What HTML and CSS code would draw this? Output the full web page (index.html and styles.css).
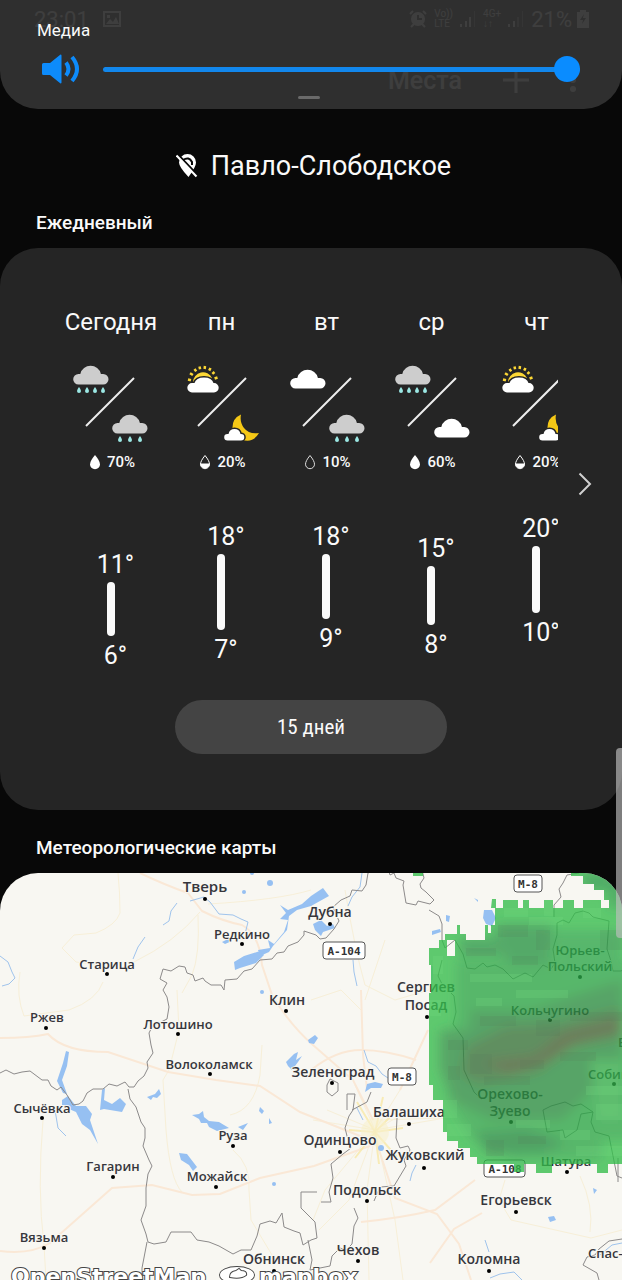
FILE: index.html
```html
<!doctype html>
<html lang="ru">
<head>
  <meta charset="utf-8">
  <meta name="viewport" content="width=device-width, initial-scale=1">
  <title>Погода</title>
  <link rel="stylesheet" href="styles.css">
</head>
<body>
  <!-- shared weather icons -->
  <svg class="sprite" aria-hidden="true">
    <symbol id="cloud" viewBox="0 0 36 21"><path d="M5.500 20.500a5.300 5.300 0 0 1 0-10.600h1.800a10.600 10.600 0 0 1 20.600 0h2.300a5.300 5.300 0 0 1 0 10.600z"/></symbol>
    <symbol id="drop" viewBox="0 0 4 6"><path d="M2 0q2 2.500 2 4a2 2 0 0 1-4 0q0-1.500 2-4z"/></symbol>
    <symbol id="rain4" viewBox="0 0 36 30">
      <use href="#cloud" width="36" height="21" fill="#cdcdcd"/>
      <g fill="#9be8e4"><use href="#drop" x="4" y="23" width="4" height="6"/><use href="#drop" x="12" y="23" width="4" height="6"/><use href="#drop" x="20" y="23" width="4" height="6"/><use href="#drop" x="28" y="23" width="4" height="6"/></g>
    </symbol>
    <symbol id="rain3" viewBox="0 0 36 30">
      <use href="#cloud" width="36" height="21" fill="#cdcdcd"/>
      <g fill="#9be8e4"><use href="#drop" x="6" y="23" width="4" height="6"/><use href="#drop" x="16" y="23" width="4" height="6"/><use href="#drop" x="26" y="23" width="4" height="6"/></g>
    </symbol>
    <symbol id="sun" viewBox="0 0 32 28">
      <path d="M6 17a10 10 0 0 1 19-4l-2 4z" fill="#fdd835"/>
      <path d="M1 14.500l3 .7M3 8.200l2.900 1.800M7.500 4l1.700 2.400M12.500 1.500l.6 2.800M18 1l-.4 3M23.500 3l-1.300 2.600M27.500 7l-2.200 1.900M30.500 12.500l-2.900 1" stroke="#fdd835" stroke-width="2.500" fill="none"/>
      <path d="M5 27.500a4.700 4.700 0 0 1 0-9.400h2.500q1.500-5.600 9.500-5.600t9.500 5.600h.5a4.700 4.700 0 0 1 0 9.400z" fill="#fff" stroke="#252525" stroke-width="3" paint-order="stroke"/>
    </symbol>
    <symbol id="moon" viewBox="0 0 36 28">
      <path d="M17 0.500q-9 4-8.500 14l9 11q11 4.500 17.500-6.500-10 1.500-15-5-4.500-6-3-13.500z" fill="#f5c816"/>
      <path d="M3.500 26.500a3.300 3.300 0 0 1 0-6.600h1q1-4.900 6-4.900t6 4.900h.500a3.300 3.300 0 0 1 0 6.600z" fill="#fff" stroke="#252525" stroke-width="3" paint-order="stroke"/>
    </symbol>
    <symbol id="wet-full" viewBox="0 0 12 16"><path d="M6 1q5 6 5 9.200a5 5 0 0 1-10 0q0-3.200 5-9.200z" fill="#fff"/></symbol>
    <symbol id="wet-half" viewBox="0 0 12 16"><path d="M6 1.500q4.500 5.500 4.500 8.700a4.500 4.500 0 0 1-9 0q0-3.200 4.500-8.700z" fill="none" stroke="#fff"/><path d="M1.200 9.500h9.600a4.800 4.800 0 1 1-9.600 0z" fill="#fff"/></symbol>
    <symbol id="wet-empty" viewBox="0 0 12 16"><path d="M6 1.500q4.500 5.500 4.500 8.700a4.500 4.500 0 0 1-9 0q0-3.200 4.500-8.700z" fill="none" stroke="#ddd"/></symbol>
  </svg>

  <header class="top">
    <div class="status">
      <span>23:01</span>
      <svg width="18" height="18" viewBox="0 0 18 18"><path fill-rule="evenodd" d="M0 1h18v16H0zM2 3v12h14V3zM3 14l4-5 3 3 3-5 3 7zM4 5h3v3H4z" fill="#fff"/></svg>
      <div class="status-right">
        <svg width="18" height="18" viewBox="0 0 18 18"><circle cx="9" cy="9" r="7" fill="#fff"/><path d="M1 4l3-3M17 4l-3-3M2 17l3-3M16 17l-3-3" stroke="#fff" stroke-width="2"/><path d="M9 5v4h4" stroke="#000" stroke-width="2" fill="none"/></svg>
        <span class="net">Vo))<br>LTE</span>
        <svg width="16" height="16" viewBox="0 0 16 16" fill="#fff"><path d="M0 13h2v3H0zM5 10h2v6H5zM9 6h2v10H9z"/><path opacity=".4" d="M14 0h1v16h-1z"/></svg>
        <span class="net">4G+<br>↓↑</span>
        <svg width="16" height="16" viewBox="0 0 16 16" fill="#fff"><path d="M0 13h2v3H0zM5 10h2v6H5z"/><path opacity=".4" d="M9 6h2v10H9zM14 0h1v16h-1z"/></svg>
        <span class="charge">21%<svg width="12" height="18" viewBox="0 0 12 18"><path fill-rule="evenodd" d="M3 0h6v2h3v16H0V2h3zM7 4l-4 6h3l-1 4 4-6H6z" fill="#fff"/></svg></span>
      </div>
    </div>
    <div class="appbar">
      <span class="appbar-title">Места</span>
      <svg width="26" height="26" viewBox="0 0 26 26"><path d="M13 0v26M0 13h26" stroke="#fff" stroke-width="3"/></svg>
      <svg width="6" height="24" viewBox="0 0 6 24" fill="#fff"><circle cx="3" cy="3" r="3"/><circle cx="3" cy="12" r="3"/><circle cx="3" cy="21" r="3"/></svg>
    </div>
  </header>

  <section class="volume">
    <label for="media">Медиа</label>
    <div class="volume-row">
      <svg width="40" height="32" viewBox="0 0 40 32"><path d="M2.500 10H9l10.500-8.500q1 0 1 1v27q0 1-1 1L9 22H2.500Q1 22 1 20.500v-9Q1 10 2.500 10z" fill="#0d8bfb"/><path d="M25 9.500q5 6.500 0 13M31 4q10 12 0 24" fill="none" stroke="#0d8bfb" stroke-width="4"/></svg>
      <input id="media" type="range" min="0" max="100" value="100">
    </div>
    <div class="grip"></div>
  </section>

  <main>
    <h1>
      <svg width="22" height="24" viewBox="0 0 22 24"><path d="M11.500 0a8.500 8.500 0 0 1 8.500 8.500q0 4.500-7.500 14.500Q3 13 3 8.500A8.500 8.500 0 0 1 11.500 0z" fill="#fff"/><path d="M7 6q6-4 9 2v3" fill="none" stroke="#080808" stroke-width="2"/><path d="M2 .5l20 21" stroke="#080808" stroke-width="2"/><path d="M.5 1.500l20 21" stroke="#fff" stroke-width="2"/></svg>
      Павло-Слободское
    </h1>

    <h2>Ежедневный</h2>
    <section class="card">
      <div class="forecast">
        <div class="days">
          <div class="day today">
            <h3>Сегодня</h3>
            <svg class="sky" width="76" height="80" viewBox="0 0 76 80"><use href="#rain4" x="0" y="1" width="36" height="30"/><path d="M13 63l48-48"/><use href="#rain3" x="39" y="50" width="36" height="30"/></svg>
            <p class="wet"><svg width="12" height="16"><use href="#wet-full"/></svg>70%</p>
            <div class="range" style="padding-top: 36px"><span>11°</span><i style="height: 54px"></i><span>6°</span></div>
          </div>
          <div class="day">
            <h3>пн</h3>
            <svg class="sky" width="76" height="80" viewBox="0 0 76 80"><use href="#sun" x="3" y="2" width="32" height="28"/><path d="M14 63l48-48"/><use href="#moon" x="40" y="51" width="36" height="28"/></svg>
            <p class="wet"><svg width="12" height="16"><use href="#wet-half"/></svg>20%</p>
            <div class="range" style="padding-top: 8px"><span>18°</span><i style="height: 76px"></i><span>7°</span></div>
          </div>
          <div class="day">
            <h3>вт</h3>
            <svg class="sky" width="76" height="80" viewBox="0 0 76 80"><use href="#cloud" x="1" y="5" width="36" height="21" fill="#fff"/><path d="M14 63l48-48"/><use href="#rain3" x="40" y="50" width="36" height="30"/></svg>
            <p class="wet"><svg width="12" height="16"><use href="#wet-empty"/></svg>10%</p>
            <div class="range" style="padding-top: 8px"><span>18°</span><i style="height: 65px"></i><span>9°</span></div>
          </div>
          <div class="day">
            <h3>ср</h3>
            <svg class="sky" width="76" height="80" viewBox="0 0 76 80"><use href="#rain4" x="1" y="1" width="36" height="30"/><path d="M14 63l48-48"/><use href="#cloud" x="40" y="54" width="36" height="21" fill="#fff"/></svg>
            <p class="wet"><svg width="12" height="16"><use href="#wet-full"/></svg>60%</p>
            <div class="range" style="padding-top: 20px"><span>15°</span><i style="height: 59px"></i><span>8°</span></div>
          </div>
          <div class="day">
            <h3>чт</h3>
            <svg class="sky" width="76" height="80" viewBox="0 0 76 80"><use href="#sun" x="3" y="2" width="32" height="28"/><path d="M14 63l48-48"/><use href="#moon" x="40" y="51" width="36" height="28"/></svg>
            <p class="wet"><svg width="12" height="16"><use href="#wet-half"/></svg>20%</p>
            <div class="range" style="padding-top: 0px"><span>20°</span><i style="height: 67px"></i><span>10°</span></div>
          </div>
        </div>
        <button class="next" aria-label="Далее"><svg width="14" height="24" viewBox="0 0 14 24"><path d="M1.500 1.500L12 12 1.500 22.500" fill="none" stroke="#d0d0d0" stroke-width="2"/></svg></button>
      </div>
      <button class="more">15 дней</button>
    </section>

    <h2>Метеорологические карты</h2>
    <section class="map">
      <svg viewBox="0 873 622 407">
        <rect y="873" width="622" height="407" fill="#f8f7f2"/>

        <g class="road">
          <path d="M118 873q2 20 2 40q-4 12-24 20l-22 2-12 13 14 14 30 4"/>
          <path d="M103 982q-6 18-34 28l-45 6q-8-20-4-44"/>
          <path d="M200 912q-25 30-66 50M198 915q2 40-6 60l-10 18"/>
          <path d="M208 904q70-4 103-14M177 990l2 40-10 40-6 10 3 50q4 50 16 62"/>
          <path d="M43 1120q-6 70 1 125l2 35M262 1045l-2 30q-6 35-30 40M233 1150q18 15 16 40l2 30 24 40"/>
          <path d="M345 890q10 60 20 95l30 15 34-10M365 1000l20-60M311 1000l30-10 20 20"/>
          <path d="M440 1118l-60 2M505 1180l-6 20 12 20 80 18 31-8M580 1176q14 30 10 56"/>
          <path d="M375 1130l-20-45M375 1130l25-40M375 1130l35-20M375 1130l-50 60-12 30M375 1130l-8 60 2 90M375 1130l20 90 8 60M375 1130l-62-10M375 1130l70-12M375 1130l-48-20M375 1130l-26 70-30 30"/>
        </g>
        <g class="highway">
          <path d="M140 873q25 12 48 20l14 18q20 10 40 14 18 10 20 40l10 30q18 30 41 50l40 35 20 40"/>
          <path d="M0 1038q30 0 48-4 16 18 60 18l60 20 48 8 44 6 40 26 70 28"/>
          <path d="M0 1251q30 4 50-8l62-55 40-3 40 10 28-1 40-16 54-12 56-20"/>
          <path d="M375 1138l20 60 42 16 22 30 12 36M361 1222q40-4 74-12l40-30M430 1263l24-34 28-16"/>
          <path d="M361 990l2 65 4 34M311 1070q25-20 50-20t55 10M400 1090l28-60"/>
        </g>
        <g stroke="#f8e9a8" opacity=".8"><path d="M375 1132l-18-30M375 1132l8-35M375 1132l22-22M375 1132l28-4M375 1132l22 25M375 1132l4 32M375 1132l-20 26M375 1132l-26-2" stroke-width="2"/><circle cx="375" cy="1132" r="14" fill="#f8f0c4" stroke="none" opacity=".6"/></g>

        <g class="river">
          <path d="M190 901l14-4 6 5 9 12 14 1 8 4 7 3-3 12"/>
          <path d="M177 903l-6 8-2 10-6 4M145 937l-7 10-5 12M0 956l8 6 4 10 3 6-6 6-7 2M362 873l-2 14-8 10-4 9M353 960l1 12 3 14M364 1050l4 12 8 4 6 8 6 4"/>
          <path d="M55 1110l3 18 8 8M357 1108l6 12M416 1165l-4 8-2 8M485 1240l4 12M490 1278l10-4 14-2 8 8M600 1255l12-10 10-2M432 966v14"/>
        </g>
        <g class="lake">
          <path d="M234 962l10-6 16-5 4 4-8 8-16 5-5 2zM258 950l12-2-2-8 6 4 10-12 4-12-8-1 6-6-6-8 8 5 14-6 9-8 12-8 6 8-18 10-14 4-8 6-2 14-14 16-4 6-9 4zM222 942l8-4 2 3-7 3z"/>
          <path d="M313 924l8-4 6 6 6-2 2 4-12 4-2 4-6-6zM286 1062l8-8 4-2-2 8 6-4-4 6-6 8-4-4zM308 1040l7-5 3 3-4 6-5-1z"/>
          <path d="M66 1051l3 1-2 14-5 14 5 14-4-1-6-12 6-18zM62 1100l6-4 8 10 10 0 6 8-2 6 8 24-8-14-8-6-6-12-14-6zM102 1090l3-2-1 12 8 4 8-6 6 6-4 8-18-3-4 1z"/>
          <path d="M147 1097l8-3 4-5 2 5-4 4-4-1-2 3zM192 1115l7-1 4-3 1 6 5 4 10 1 10 6-12 3-8-4-2-4-6 0-2-4zM179 1153l8 1 10 13-4 4-4-6-8-5zM238 1127l10-4-5 7zM260 1107l4 4-2 3-3-3zM269 1118l3 5-3 1z"/>
          <path d="M367 1084l8-2 8 2-2 4-10 0-6 4zM484 910l8 0 4 8-4 8-6-2-3-6zM446 915l4 1-1 6-3-1zM432 931l8-2 1 3-9 3zM474 898l4 2 0 2zM548 1217l6-1 2 4-6 2zM593 1188l4 2-3 4z"/>
          <circle cx="270" cy="883" r="3"/><circle cx="244" cy="892" r="2"/><circle cx="252" cy="873" r="2"/><circle cx="262" cy="992" r="2"/><circle cx="274" cy="1184" r="2"/><circle cx="381" cy="1148" r="3"/>
        </g>

        <g class="border">
          <path d="M0 1073l6-3 8 4 8-2 8-1 8 6 4 3 6 0 3 6 6 4 4-3 6 8 6 10 6-1 4-3 4-8 6-4 10 0 6-5 8 2 8-4 4 5 5 0 4-6 6-5 4-8-1-6 6-9-2-8-2-12 4-8 8-3 6-3 2-12-2-10-4-7 4-7-7-4 3-10 8 2 8-5 6 1 2 6 6 2 2 6 8-3 2 3 6 4 10 0 3 5 1-10 12-1 7-8 8-2 8-9 12-1 5-6 7-1 4-6 10-4 6-7 0-4 12 4 4 4 6-1 8-9 5-8-6-14 8-7 9-4 2-6 10 1 4-6 2-12 10-6 4-2 6 4 2 6 4-2 2 5 8 3-1 4 3 18 10 2 2-4 12 3 4-4-8-8-5-4-1-4 4-6-2-8 3-6-1-8"/>
          <path d="M429 910l10 6 3 8v16l3 8 10-8 8 14 4 14 8 1 8-6 4 4 8-2 8 4 10 10 12-6 8 4 10-12 8 4 4-6-2-14 4-14 0-12 6-3 6 3 6-10 8-2 6 2 4 4 16 4-2 28 4 12 2 10 8 0 8-4"/>
          <path d="M579 873l-12 2-4 8-4 6 2 8-7 8 0 12M442 960l-4 16 4 8 12 12 2 16-3 12 10 14 1 32 10 22 8 8"/>
          <path d="M128 1089l2 10 6 8 5 15 4 6 0 10-2 8 6 14 3 6-4 8-2 14 0 18-5 14 5 14 2 8 6 2 12-2 5-10 10 0 10 0 6 8 12 2 10 4 14 8 8-4 10 0 6-14 3-12 10-3 6 2 6-10 2 14 10 4 6 2 3 12 8-5 6-2-2-16-14-14 0-16 16 0"/>
          <path d="M147 1242l-5 26 0 12M308 1240l4 20-2 10 20-4 2-10 8-8 6 2 6-6 2-18 4-8-4-10"/>
          <path d="M327 1085l3-6 8 4 0 8-6 5-5-4zM347 1110v-16l8 0-2 16-4 6-4 12 2 8 4 12-8 6-12 10 2 14-4 14 2 10-10 0M397 1118l-1 20 4 10 8-2 2 4-6 10 2 6-12 20-14 1-6 14M352 1110l15-8 4-10"/>
          <path d="M543 1110l8-4 14-4 8 4 8-2 12 8-2 10 4 10 14 4 4 20 4 20 5 2M543 1110l4 22 16-2 2 8 12-8 4-16 12-2M583 1265l4-8 8-2 4-6 10-8 13-2M583 1265l14 8 2 7M618 1158v24"/>
        </g>

        <g class="dot">
          <circle cx="205" cy="899" r="2"/><circle cx="242" cy="944" r="2"/><circle cx="330" cy="924" r="2"/><circle cx="107" cy="974" r="2"/><circle cx="286" cy="1011" r="2"/><circle cx="46" cy="1028" r="2"/><circle cx="178" cy="1034" r="2"/><circle cx="210" cy="1074" r="2"/><circle cx="427" cy="1017" r="2"/><circle cx="550" cy="1020" r="2"/><circle cx="580" cy="977" r="2"/><circle cx="332" cy="1083" r="2"/><circle cx="409" cy="1124" r="2"/><circle cx="340" cy="1152" r="2"/><circle cx="424" cy="1168" r="2"/><circle cx="367" cy="1201" r="2"/><circle cx="358" cy="1261" r="2"/><circle cx="274" cy="1271" r="2"/><circle cx="489" cy="1271" r="2"/><circle cx="516" cy="1212" r="2"/><circle cx="567" cy="1172" r="2"/><circle cx="511" cy="1122" r="2"/><circle cx="614" cy="1084" r="2"/><circle cx="42" cy="1118" r="2"/><circle cx="233" cy="1146" r="2"/><circle cx="113" cy="1177" r="2"/><circle cx="216" cy="1187" r="2"/><circle cx="44" cy="1248" r="2"/>
        </g>
        <g class="town big">
          <text class="city" x="205" y="892">Тверь</text>
          <text x="330" y="917">Дубна</text>
          <text x="287" y="1005">Клин</text>
          <text x="426" y="992">Сергиев</text>
          <text x="426" y="1010">Посад</text>
          <text x="333" y="1077">Зеленоград</text>
          <text x="409" y="1117">Балашиха</text>
          <text x="340" y="1145">Одинцово</text>
          <text x="425" y="1160">Жуковский</text>
          <text x="367" y="1195">Подольск</text>
          <text x="358" y="1255">Чехов</text>
          <text x="274" y="1264">Обнинск</text>
          <text x="489" y="1264">Коломна</text>
          <text x="516" y="1205">Егорьевск</text>
          <text x="510" y="1099">Орехово-</text>
          <text x="510" y="1116">Зуево</text>
        </g>
        <g class="town">
          <text x="242" y="939">Редкино</text>
          <text x="107" y="969">Старица</text>
          <text x="47" y="1022">Ржев</text>
          <text x="178" y="1029">Лотошино</text>
          <text x="209" y="1069">Волоколамск</text>
          <text x="550" y="1015">Кольчугино</text>
          <text x="580" y="955">Юрьев-</text>
          <text x="580" y="971">Польский</text>
          <text x="566" y="1166">Шатура</text>
          <text x="42" y="1113">Сычёвка</text>
          <text x="233" y="1140">Руза</text>
          <text x="113" y="1171">Гагарин</text>
          <text x="217" y="1181">Можайск</text>
          <text x="44" y="1242">Вязьма</text>
          <text class="cut" x="588" y="1079">Собин</text>
          <text class="cut" x="618" y="1047">В</text>
          <text class="cut" x="588" y="1258">Спас-К</text>
        </g>
        <g class="shield">
          <rect x="514" y="875" width="28" height="17" rx="3"/><text x="528" y="888">М-8</text>
          <rect x="323" y="942" width="42" height="17" rx="3"/><text x="344" y="955">А-104</text>
          <rect x="388" y="1068" width="28" height="17" rx="3"/><text x="402" y="1081">М-8</text>
          <rect x="484" y="1160" width="41" height="17" rx="3"/><text x="505" y="1173">А-108</text>
        </g>

        <!-- precipitation radar -->
        <defs>
          <clipPath id="radar">
            <path clip-rule="evenodd" d="M492 899h4v9h7v-8h15v8h5v-8h6v8h15v-8h9v8h10v-8h11v8h9v-8h18v8h8v-8h-5v-10h-10v-6h-11v-8h-12v-3h51v291h-14v9h-11v-9h-45v9h-16v-9h-12v8h-10v-8h-37v-7h-7v-9h-12v-7h-11v-9h-4v-32h-10v-15h-4v-92h2v-28h-2v-17h10v-8h6v-6h12v-9h3v9h6v6h19v-15h3v8h3v-8h4v-17h-4zM447 940v16h8v-16zM413 873h10v3h-10z"/>
          </clipPath>
          <filter id="soft" x="-20%" y="-20%" width="140%" height="140%"><feGaussianBlur stdDeviation="6"/></filter>
        </defs>
        <g clip-path="url(#radar)" opacity=".78">
          <path d="M400 873h222v310H400z" fill="#33bd4a"/>
          <g filter="url(#soft)">
            <path d="M456 960h186v180h-40v20h-90l-40-20-24-40v-40l8-40z" fill="#2aa645"/>
            <path d="M496 924h56v40h-40l-12-8h-40v-18h36z" fill="#259442"/>
            <path d="M550 930h72v50h-60z" fill="#2ca646"/>
            <path d="M440 1030h30v-20h60l92-30v80l-60 60h-70l-40-20-12-30z" fill="#2b8d40"/>
            <path d="M466 1046l40-20 50-2 66-16v30l-50 8-34 26-60 12-18-10z" fill="#367238"/>
            <path d="M482 1062l52-6 30-24 56-14v14l-44 12-34 20-34 10z" fill="#465c30"/>
            <path d="M476 1132l50-4 40 14-20 10-60 2z" fill="#238a3c"/>
            <path d="M590 1060h32v60h-24z" fill="#33ad4a"/>
            <path d="M583 873h39v35h-13v-18h-26z" fill="#239540"/>
          </g>
          <g fill="#54d865" opacity=".22">
            <path d="M504 908h24v9h-24zM544 900h9v16h-9zM583 908h18v10h-18zM529 917h34v8h-34zM429 1000h12v16h-12zM433 956h10v18h-10zM441 1100h16v18h-16zM447 1124h24v12h-24zM470 974h62v8h-62zM516 990h52v8h-52zM476 998h26v8h-26zM586 1086h36v9h-36zM560 1130h30v10h-30zM596 1104h26v16h-26zM516 1120h34v8h-34zM576 1146h46v10h-46z"/>
          </g>
          <g fill="#254d2a" opacity=".14">
            <path d="M498 925h30v12h-30zM536 930h14v20h-14zM466 948h30v8h-30zM512 956h26v9h-26zM448 1040h20v10h-20zM480 1016h36v10h-36zM536 1020h24v16h-24zM570 1012h52v9h-52zM470 1054h22v20h-22zM520 1060h24v9h-24zM448 1066h12v14h-12zM560 1052h36v9h-36zM484 1076h46v9h-46zM486 1140h18v16h-18zM518 1136h28v8h-28zM600 930h22v20h-22z"/>
          </g>
        </g>

        <g class="credit">
          <a href="https://www.openstreetmap.org/"><text x="11" y="1284">OpenStreetMap</text></a>
          <a href="https://www.mapbox.com/"><ellipse cx="237" cy="1275" rx="17" ry="8"/><path d="M230 1277q0-5 6-6l3-2 2 2q6 0 5 4-5 4-16 2z"/><text x="259" y="1284">mapbox</text></a>
        </g>
      </svg>
    </section>
  </main>
  <div class="scrollbar"></div>
</body>
</html>
```
FILE: styles.css
```css
* { box-sizing: border-box; }
body {
  position: relative;
  margin: 0;
  background: #080808;
  color: #fafafa;
  font-family: Roboto, "Noto Sans", sans-serif;
  overflow-x: hidden;
}
h1, h2, h3, p { margin: 0; }
button {
  border: 0;
  padding: 0;
  color: inherit;
  font-family: inherit;
}
svg { display: block; flex: none; }
.sprite { position: absolute; width: 0; height: 0; }

/* status bar and app bar, dimmed behind the volume panel */
.top { height: 109px; }
.status {
  display: flex;
  align-items: center;
  gap: 14px;
  height: 38px;
  padding: 0 33px 0 34px;
  font-size: 22px;
}
.status-right {
  display: flex;
  align-items: center;
  gap: 7px;
  margin-left: auto;
}
.net { font-size: 10px; line-height: 10px; }
.charge { display: flex; align-items: center; gap: 5px; }
.appbar {
  display: flex;
  align-items: center;
  justify-content: flex-end;
  gap: 41px;
  height: 84px;
  padding-right: 46px;
}
.appbar-title { font-size: 25px; font-weight: 500; }

.volume {
  position: absolute;
  top: 0;
  left: 0;
  right: 0;
  height: 109px;
  padding: 18px 42px 0 37px;
  border-radius: 0 0 38px 38px;
  background: rgba(50, 50, 50, .94);
}
.volume label {
  display: block;
  font-size: 17px;
  line-height: 24px;
}
.volume-row {
  display: flex;
  align-items: center;
  gap: 22px;
  height: 54px;
  padding-left: 4px;
}
.volume input {
  flex: 1;
  min-width: 0;
  height: 26px;
  margin: 0;
  background: transparent;
  -webkit-appearance: none;
  appearance: none;
}
.volume input::-webkit-slider-runnable-track {
  height: 5px;
  border-radius: 3px;
  background: #1287ec;
}
.volume input::-webkit-slider-thumb {
  -webkit-appearance: none;
  width: 26px;
  height: 26px;
  margin-top: -11px;
  border-radius: 50%;
  background: #0a8cff;
}
.grip {
  width: 22px;
  height: 3px;
  margin: 0 auto;
  border-radius: 2px;
  background: #6a6a6a;
}

h1 {
  display: flex;
  align-items: center;
  justify-content: center;
  gap: 13px;
  padding: 38px 0 0 5px;
  font-size: 27px;
  font-weight: 400;
  line-height: 38px;
}
h2 {
  padding: 0 36px;
  font-size: 19px;
  font-weight: 500;
  line-height: 24px;
}
h1 + h2, .card + h2 { margin: 26px 0 13px; }

.card {
  height: 562px;
  padding-top: 56px;
  border-radius: 38px;
  background: #252525;
}
.forecast {
  display: grid;
  grid-template-columns: 1fr 64px;
}
.days {
  display: flex;
  height: 396px;
  padding-left: 53px;
  overflow: hidden;
}
.day {
  flex: none;
  display: flex;
  flex-direction: column;
  align-items: center;
  width: 105px;
}
.today { width: 116px; }
h3 {
  font-size: 24px;
  font-weight: 400;
  line-height: 36px;
}
.sky { margin-top: 23px; }
.sky path { stroke: #eee; stroke-width: 2; }
.wet {
  display: flex;
  align-items: center;
  gap: 6px;
  margin: 9px 0 40px;
  padding-left: 2px;
  font-size: 15px;
  font-weight: 500;
  line-height: 20px;
}
.range {
  display: flex;
  flex-direction: column;
  align-items: center;
}
.range span {
  padding-left: 9px;
  font-size: 25px;
  line-height: 34px;
}
.range i {
  width: 8px;
  margin-bottom: 3px;
  border-radius: 4px;
  background: #fafafa;
}
.next {
  width: 54px;
  height: 60px;
  margin-top: 150px;
  background: none;
}
.next svg { margin: 0 auto; }
.more {
  display: block;
  width: 272px;
  height: 54px;
  margin: 0 auto;
  border-radius: 27px;
  background: #444;
  font-family: "Roboto Condensed", Roboto, sans-serif;
  font-size: 21px;
}

.map {
  overflow: hidden;
  border-radius: 38px 38px 0 0;
}
.map svg { width: 100%; height: auto; }
.road { fill: none; stroke: #f7efd8; stroke-width: 1; }
.highway { fill: none; stroke: #fae8d6; stroke-width: 2; }
.river { fill: none; stroke: #9fc3ec; stroke-width: 1; }
.lake { fill: #96c0f2; }
.border { fill: none; stroke: #8c8a8a; stroke-width: 1; }
.town {
  fill: #36363c;
  stroke: #f8f7f2;
  stroke-width: 2;
  paint-order: stroke;
  font-family: "Open Sans", "Noto Sans", sans-serif;
  font-size: 13px;
  font-weight: 600;
  text-anchor: middle;
}
.big { font-size: 14px; }
.city { font-size: 15px; }
.cut { text-anchor: start; }
.shield rect { fill: #fff; stroke: #555; stroke-width: 1; }
.shield text {
  fill: #333;
  font-family: "DejaVu Sans Mono", monospace;
  font-size: 11px;
  font-weight: 700;
  text-anchor: middle;
}
.credit text, .credit ellipse, .credit path {
  fill: #fff;
  stroke: #444;
  stroke-width: 2;
  paint-order: stroke;
}
.credit text {
  font-family: "DejaVu Sans", sans-serif;
  font-size: 22px;
  font-weight: 700;
}
.scrollbar {
  position: absolute;
  top: 748px;
  right: 0;
  width: 6px;
  height: 190px;
  border-radius: 4px 0 0 4px;
  background: rgba(190, 190, 190, .65);
}
```
